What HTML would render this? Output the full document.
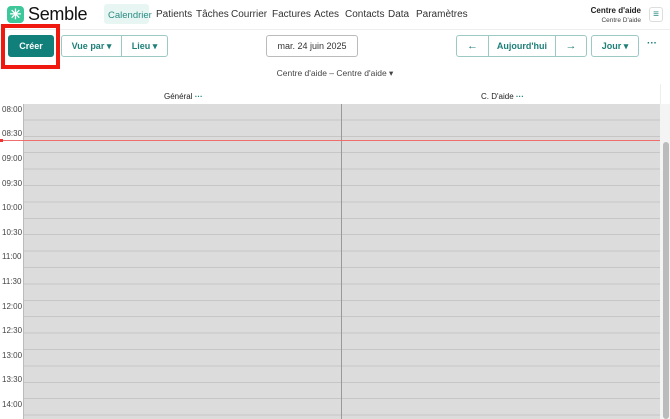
<!DOCTYPE html>
<html><head><style>
*{margin:0;padding:0;box-sizing:border-box}
body{width:670px;height:419px;overflow:hidden;background:#fff;font-family:"Liberation Sans",sans-serif;position:relative;color:#222}
.a{position:absolute}
.nav{font-size:10px;color:#333;top:9px}
.btn{position:absolute;border:1px solid #9cc9c4;border-radius:3px;color:#1e7f78;font-size:9px;font-weight:bold;display:flex;align-items:center;justify-content:center;background:#fff}
.t{position:absolute;left:2px;font-size:8px;color:#444}
</style></head><body>
<div class="a" style="left:0;top:29px;width:670px;height:1px;background:#eee"></div>
<div class="a" style="left:7px;top:6px;width:17px;height:17px;background:#3ec79b;border-radius:4px;color:#fff;font-size:14px;line-height:17px;text-align:center;font-weight:bold">✳</div>
<div class="a" style="left:28px;top:4px;font-size:18px;letter-spacing:-0.3px;color:#111">Semble</div>
<div class="a" style="left:104px;top:4px;width:45px;height:20px;background:#e8f6f3;border-radius:3px"></div>
<div class="a nav" style="left:108px;color:#2a8a82;font-size:9.5px;top:10px">Calendrier</div>
<div class="a nav" style="left:156px">Patients</div>
<div class="a nav" style="left:196px">Tâches</div>
<div class="a nav" style="left:231px">Courrier</div>
<div class="a nav" style="left:272px">Factures</div>
<div class="a nav" style="left:314px">Actes</div>
<div class="a nav" style="left:345px">Contacts</div>
<div class="a nav" style="left:388px">Data</div>
<div class="a nav" style="left:416px">Paramètres</div>
<div class="a" style="right:29px;top:6px;font-size:8px;font-weight:bold">Centre d'aide</div>
<div class="a" style="right:29px;top:17px;font-size:6.5px;color:#444">Centre D'aide</div>
<div class="a" style="left:649px;top:7px;width:14px;height:15px;border:1px solid #ddd;border-radius:3px;color:#2a8a82;font-size:10px;text-align:center;line-height:13px">≡</div>
<div class="a" style="left:1px;top:24px;width:59px;height:45px;border:4px solid #f0190f"></div>
<div class="btn" style="left:8px;top:35px;width:46px;height:22px;background:#12807a;border-color:#12807a;color:#fff">Créer</div>
<div class="btn" style="left:61px;top:35px;width:61px;height:22px;border-radius:3px 0 0 3px">Vue par ▾</div>
<div class="btn" style="left:121px;top:35px;width:47px;height:22px;border-radius:0 3px 3px 0">Lieu ▾</div>
<div class="btn" style="left:266px;top:35px;width:92px;height:22px;border-color:#bbb;color:#333;font-weight:normal">mar. 24 juin 2025</div>
<div class="btn" style="left:456px;top:35px;width:33px;height:22px;border-radius:3px 0 0 3px;font-size:11px">←</div>
<div class="btn" style="left:488px;top:35px;width:68px;height:22px;border-radius:0">Aujourd'hui</div>
<div class="btn" style="left:555px;top:35px;width:32px;height:22px;border-radius:0 3px 3px 0;font-size:11px">→</div>
<div class="btn" style="left:591px;top:35px;width:48px;height:22px">Jour ▾</div>
<div class="a" style="left:647px;top:38px;color:#1e7f78;font-size:10px;font-weight:bold">···</div>
<div class="a" style="left:0;width:670px;text-align:center;top:68px;font-size:8.5px;color:#444">Centre d'aide – Centre d'aide ▾</div>
<div class="a" style="left:164px;top:92px;font-size:8px">Général <span style="color:#1e7f78;font-weight:bold">···</span></div>
<div class="a" style="left:481px;top:92px;font-size:8px">C. D'aide <span style="color:#1e7f78;font-weight:bold">···</span></div>
<div class="a" style="left:660px;top:84px;width:1px;height:20px;background:#eee"></div>
<div class="a" style="left:23px;top:104px;width:637px;height:315px;background:#dcdcdc;background-image:repeating-linear-gradient(to bottom,transparent 0,transparent 15.4px,#c6c6c6 15.4px,#c6c6c6 16.4px)"></div>
<div class="a" style="left:23px;top:104px;width:1px;height:315px;background:#bbb"></div>
<div class="a" style="left:341px;top:104px;width:1px;height:315px;background:#999"></div>
<div class="a" style="left:0;top:140px;width:660px;height:1px;background:#ef6d6d"></div>
<div class="a" style="left:0;top:139px;width:3px;height:3px;background:#e33"></div>
<div class="a" style="left:660px;top:104px;width:10px;height:315px;background:#f4f4f4"></div>
<div class="a" style="left:663px;top:142px;width:6px;height:277px;background:#bbb;border-radius:3px"></div>
<div class="t" style="top:105px">08:00</div>
<div class="t" style="top:129px">08:30</div>
<div class="t" style="top:154px">09:00</div>
<div class="t" style="top:179px">09:30</div>
<div class="t" style="top:203px">10:00</div>
<div class="t" style="top:228px">10:30</div>
<div class="t" style="top:252px">11:00</div>
<div class="t" style="top:277px">11:30</div>
<div class="t" style="top:302px">12:00</div>
<div class="t" style="top:326px">12:30</div>
<div class="t" style="top:351px">13:00</div>
<div class="t" style="top:375px">13:30</div>
<div class="t" style="top:400px">14:00</div>
</body></html>
